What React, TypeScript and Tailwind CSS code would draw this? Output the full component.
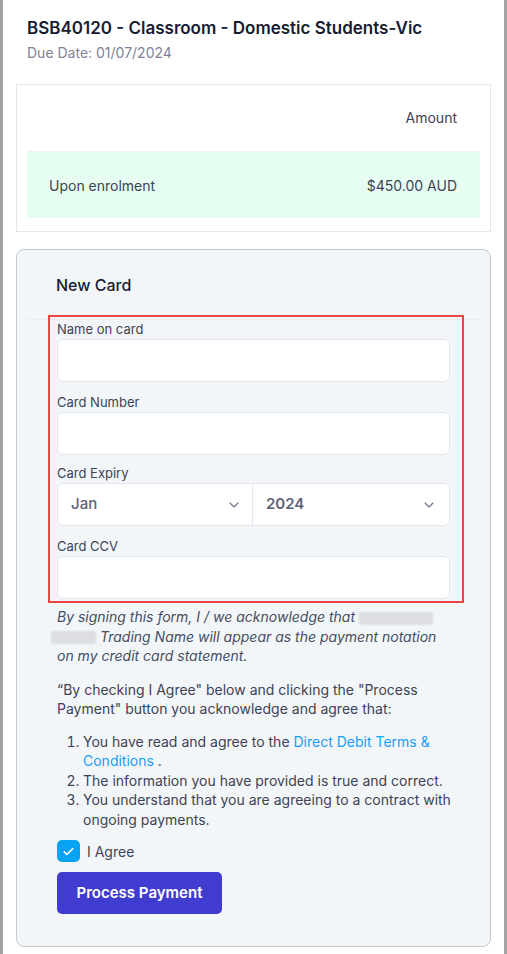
import React from "react";

const Chevron = () => (
  <svg width="16" height="16" viewBox="0 0 24 24" fill="none" stroke="#6b7085" strokeWidth="1.6" strokeLinecap="round" strokeLinejoin="round">
    <path d="M6 9l6 6 6-6" />
  </svg>
);

const Field = ({ label, className = "" }: { label: string; className?: string }) => (
  <div className={className}>
    <label className="block text-[13px] leading-[18px] text-[#3f4254] mb-px">{label}</label>
    <input className="w-full h-[43px] bg-white border border-[#e4e6ef] rounded-[6px] outline-none px-3" />
  </div>
);

const App = () => {
  return (
    <div className="bg-[#a3a3a3] px-[3px] min-h-[954px] font-['Inter',sans-serif]">
      <div className="bg-white min-h-[954px] px-[13px] pb-[9px]">
        <div className="px-[11px] pt-[16px]">
          <h2 className="text-[17px] leading-6 font-semibold text-[#181c32]">
            BSB40120 - Classroom - Domestic Students-Vic
          </h2>
          <p className="text-[14px] leading-5 text-[#7e8299] mt-[3px]">Due Date: 01/07/2024</p>
        </div>

        {/* installments table */}
        <div className="mt-[21px] border border-[#e4e6ef] p-[10px] pb-[13px]">
          <div className="h-[57px] pt-[13px] px-[23px] flex justify-end border-b border-[#eef0f5] text-[14px] leading-5 text-[#3f4254]">
            Amount
          </div>
          <div className="h-[66px] bg-[#e6fdf2] px-[22px] flex items-center justify-between text-[14px] text-[#3f4254]">
            <span>Upon enrolment</span>
            <span className="pr-px">$450.00 AUD</span>
          </div>
        </div>

        {/* payment card */}
        <div className="mt-[17px] border border-[#c6c8d2] rounded-lg bg-[#f3f6f9] pb-[32px]">
          <div className="h-[70px] mx-[10px] border-b border-[#e9ecf2] px-[29px] flex items-center">
            <h3 className="text-[16px] font-medium text-[#181c32]">New Card</h3>
          </div>

          <div className="px-10">
            <div className="relative">
              <div className="absolute -left-[9px] -right-[14px] -top-[5px] -bottom-[4px] border-2 border-[#ef4444] pointer-events-none" />
              <Field label="Name on card" />
              <Field label="Card Number" className="mt-[11px]" />
              <div className="mt-[9px]">
                <label className="block text-[13px] leading-[18px] text-[#3f4254] mb-px">Card Expiry</label>
                <div className="flex h-[43px] bg-white border border-[#e4e6ef] rounded-[6px]">
                  <div className="flex-1 flex items-center justify-between pl-[13px] pr-[10px] border-r border-[#e4e6ef]">
                    <span className="text-[15px] font-medium text-[#5e6278]">Jan</span>
                    <Chevron />
                  </div>
                  <div className="flex-1 flex items-center justify-between pl-[13px] pr-[12px]">
                    <span className="text-[15px] font-semibold text-[#5e6278]">2024</span>
                    <Chevron />
                  </div>
                </div>
              </div>
              <Field label="Card CCV" className="mt-[11px]" />
            </div>

            <p className="mt-2 text-[14px] leading-[19.5px] italic text-[#464e5f]">
              By signing this form, I / we acknowledge that{" "}
              <span className="inline-block align-middle w-[74px] h-[13px] bg-[#dcdde1] blur-[1px]" />
              <br />
              <span className="inline-block align-middle -ml-[6px] w-[45px] h-[13px] bg-[#dcdde1] blur-[1px]" />{" "}
              Trading Name will appear as the payment notation
              <br />
              on my credit card statement.
            </p>

            <p className="mt-[14px] text-[14px] leading-[19.5px] text-[#3f4254]">
              “By checking I Agree" below and clicking the "Process
              <br />
              Payment" button you acknowledge and agree that:
            </p>

            <ol className="mt-[13px] list-decimal pl-[26px] text-[14px] leading-[19.5px] text-[#3f4254] whitespace-nowrap">
              <li>
                You have read and agree to the{" "}
                <a className="text-[#1b9cf2]">Direct Debit Terms &amp;
                <br />
                Conditions</a> .
              </li>
              <li>The information you have provided is true and correct.</li>
              <li>
                You understand that you are agreeing to a contract with
                <br />
                ongoing payments.
              </li>
            </ol>

            <label className="mt-[11px] flex items-center gap-[7px]">
              <span className="w-[23px] h-[22px] rounded-[5px] bg-[#08a4f4] flex items-center justify-center">
                <svg width="13" height="13" viewBox="0 0 24 24" fill="none" stroke="white" strokeWidth="3" strokeLinecap="round" strokeLinejoin="round">
                  <path d="M4 12.5l5 5L20 6.5" />
                </svg>
              </span>
              <span className="text-[14px] text-[#3f4254]">I Agree</span>
            </label>

            <button className="mt-[10px] h-[42px] w-[165px] rounded-[5px] bg-[#413cd0] text-white text-[15px] font-semibold">
              Process Payment
            </button>
          </div>
        </div>
      </div>
    </div>
  );
};

export default App;
